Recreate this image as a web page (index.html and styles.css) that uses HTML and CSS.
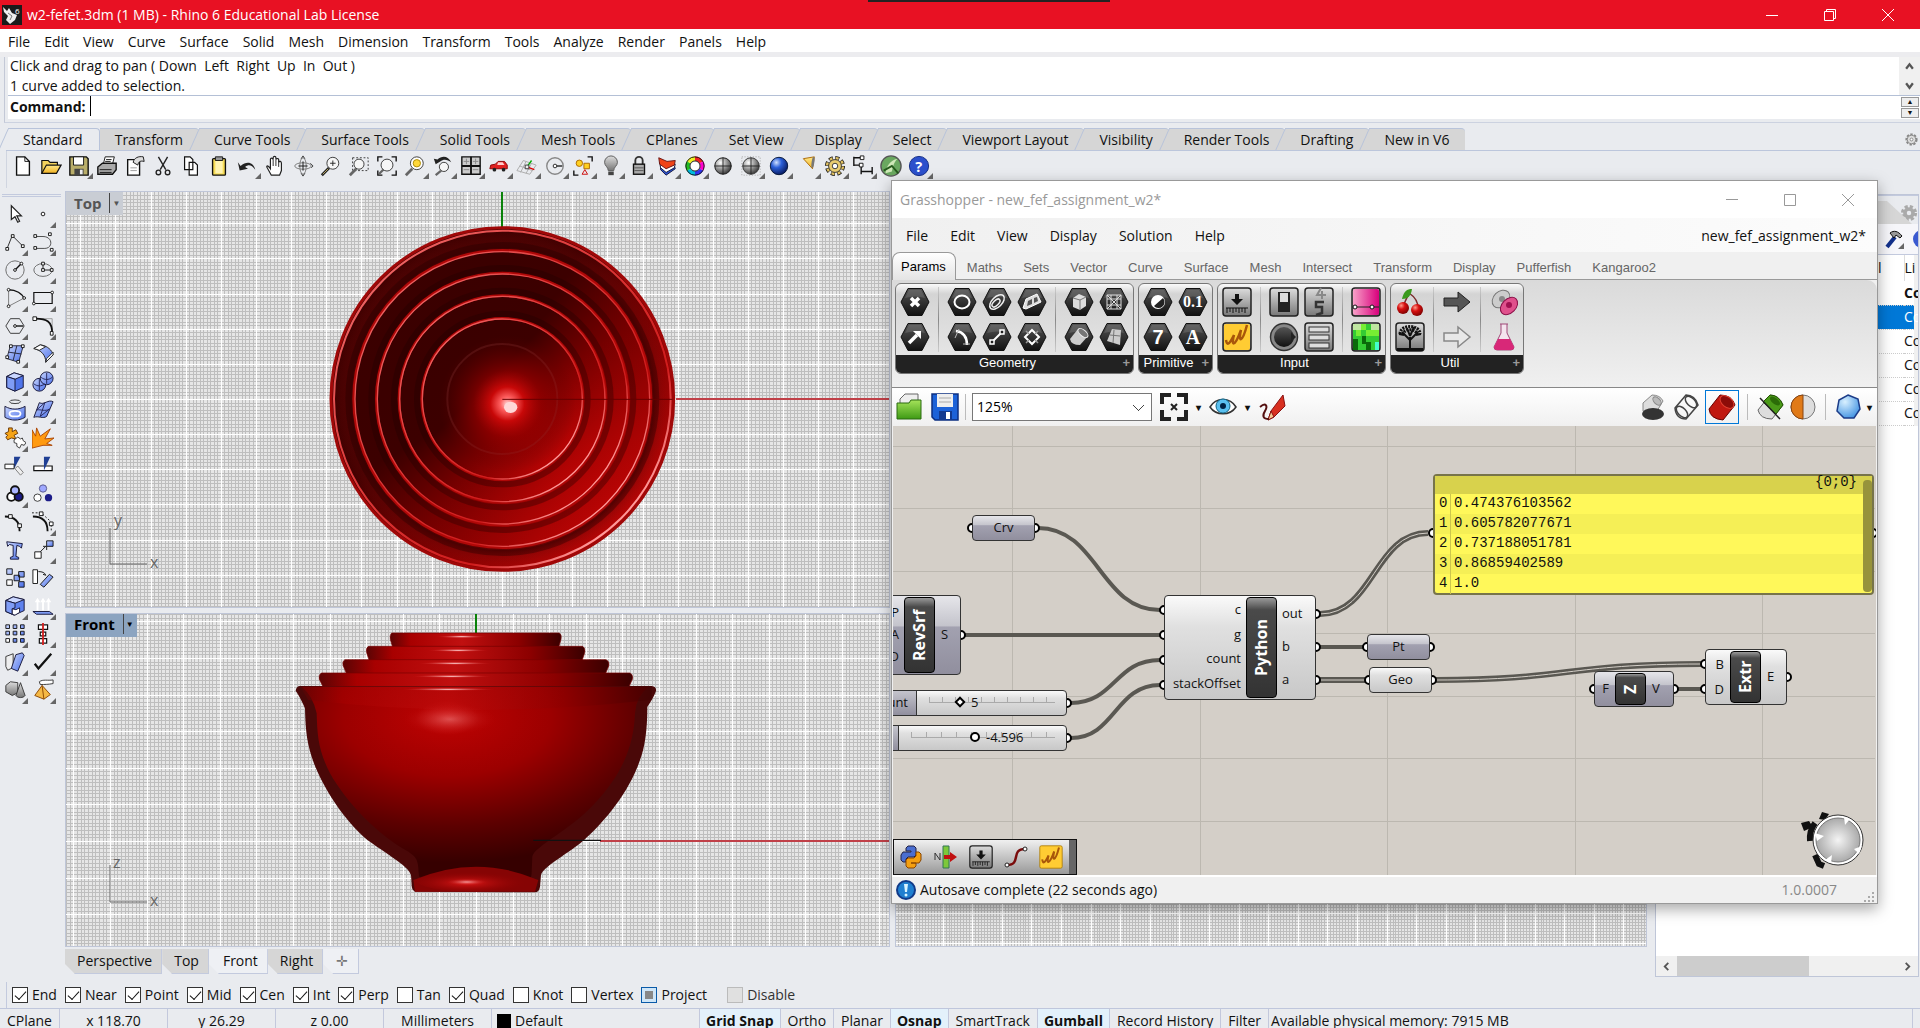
FILE: index.html
```html
<!DOCTYPE html>
<html lang="en">
<head>
  <meta charset="UTF-8" />
  <meta name="viewport" content="width=device-width, initial-scale=1.0"/>
  <title>w2-fefet.3dm (1 MB) - Rhino 6 Educational Lab License</title>
  <link rel="stylesheet" href="styles.css">
</head>
<body>
  <!-- shared gradients and shapes -->
  <svg class="defs" aria-hidden="true">
    <defs>
      <linearGradient id="gBlue" x1="0" y1="0" x2="1" y2="1"><stop offset="0" stop-color="#c9d6ff"/><stop offset="1" stop-color="#4a6fe8"/></linearGradient>
      <linearGradient id="gDark" x1="0" y1="0" x2="0" y2="1"><stop offset="0" stop-color="#555"/><stop offset="1" stop-color="#111"/></linearGradient>
      <linearGradient id="gGray" x1="0" y1="0" x2="0" y2="1"><stop offset="0" stop-color="#ddd"/><stop offset="1" stop-color="#777"/></linearGradient>
      <linearGradient id="gFolder" x1="0" y1="0" x2="0" y2="1"><stop offset="0" stop-color="#ffe98a"/><stop offset="1" stop-color="#f0b020"/></linearGradient>
      <linearGradient id="gGreen" x1="0" y1="0" x2="0" y2="1"><stop offset="0" stop-color="#a5e35a"/><stop offset="1" stop-color="#3e9a14"/></linearGradient>
      <linearGradient id="gPink" x1="0" y1="0" x2="1" y2="0"><stop offset="0" stop-color="#f8a0c8"/><stop offset="1" stop-color="#d8007c"/></linearGradient>
      <radialGradient id="gBall" cx=".35" cy=".3" r=".75"><stop offset="0" stop-color="#fff"/><stop offset=".5" stop-color="#999"/><stop offset="1" stop-color="#333"/></radialGradient>
      <radialGradient id="gBlueBall" cx=".35" cy=".3" r=".75"><stop offset="0" stop-color="#cfe0ff"/><stop offset=".4" stop-color="#2b5fd8"/><stop offset="1" stop-color="#06185c"/></radialGradient>
      <radialGradient id="gRedBall" cx=".35" cy=".3" r=".75"><stop offset="0" stop-color="#ff9a8a"/><stop offset=".4" stop-color="#d81010"/><stop offset="1" stop-color="#7a0000"/></radialGradient>
      <radialGradient id="gSky" cx=".35" cy=".3" r=".8"><stop offset="0" stop-color="#d8f0ff"/><stop offset="1" stop-color="#3a8ee0"/></radialGradient>
      <symbol id="hex" viewBox="0 0 30 30"><path d="M8 1.500h14L29 15l-7 13.500H8L1 15z" fill="url(#gDark)" stroke="#111"/><path d="M9 3h12l4 8Q15 8 5 11z" fill="#888" opacity=".35"/></symbol>
      <symbol id="tile" viewBox="0 0 30 30"><rect x="1" y="1" width="28" height="28" rx="3" fill="url(#gGray)" stroke="#222" stroke-width="1.500"/></symbol>
    </defs>
  </svg>

  <header class="titlebar">
    <svg class="app-icon" viewBox="0 0 20 20"><rect width="20" height="20" fill="#1b1b1b"/><path d="M1 2l4 4 2-3 3 5 5 2-2 5-5 4-4-4 2-4-4-4z" fill="#eee"/><path d="M6 8l4 3-2 4" stroke="#777" fill="none"/><text x="13" y="9" font-size="8" fill="#fff">6</text></svg>
    <h1>w2-fefet.3dm (1 MB) - Rhino 6 Educational Lab License</h1>
    <div class="win-buttons">
      <button aria-label="Minimize"><svg viewBox="0 0 12 12"><path d="M0 6.500h12"/></svg></button>
      <button aria-label="Restore"><svg viewBox="0 0 12 12"><path d="M.5 2.500h9v9h-9zM2.500 2.500v-2h9v9h-2"/></svg></button>
      <button aria-label="Close"><svg viewBox="0 0 12 12"><path d="M0 0l12 12M12 0L0 12"/></svg></button>
    </div>
  </header>

  <nav class="menu">
    <a href="#">File</a><a href="#">Edit</a><a href="#">View</a><a href="#">Curve</a><a href="#">Surface</a><a href="#">Solid</a><a href="#">Mesh</a><a href="#">Dimension</a><a href="#">Transform</a><a href="#">Tools</a><a href="#">Analyze</a><a href="#">Render</a><a href="#">Panels</a><a href="#">Help</a>
  </nav>

  <section class="command">
    <div class="history">
      <div class="history-text"><p>Click and drag to pan ( Down  Left  Right  Up  In  Out )</p><p>1 curve added to selection.</p></div>
      <div class="history-scroll"><button aria-label="Scroll up"><svg viewBox="0 0 8 8"><path d="M1 6l3-4 3 4"/></svg></button><button aria-label="Scroll down"><svg viewBox="0 0 8 8"><path d="M1 2l3 4 3-4"/></svg></button></div>
    </div>
    <div class="prompt">
      <label for="cmd">Command:</label><i class="caret"></i><input id="cmd" type="text">
      <div class="spin"><button aria-label="Previous command">▲</button><button aria-label="Next command">▼</button></div>
    </div>
  </section>

  <nav class="tabs">
    <button class="active">Standard</button><button>Transform</button><button>Curve Tools</button><button>Surface Tools</button><button>Solid Tools</button><button>Mesh Tools</button><button>CPlanes</button><button>Set View</button><button>Display</button><button>Select</button><button>Viewport Layout</button><button>Visibility</button><button>Render Tools</button><button>Drafting</button><button>New in V6</button>
    <svg class="gear" viewBox="0 0 16 16"><circle cx="8" cy="8" r="5.500" fill="#ddd" stroke="#888" stroke-width="2" stroke-dasharray="2.500 1.500"/><circle cx="8" cy="8" r="4.500" fill="#ddd" stroke="#888"/><circle cx="8" cy="8" r="1.500" fill="#fff" stroke="#888"/></svg>
  </nav>

  <div class="toolbar">
    <button aria-label="New"><svg viewBox="0 0 24 24"><path d="M5 2h9l5 5v15H5z" fill="#fff" stroke="#111" stroke-width="1.500"/><path d="M14 2v5h5" fill="none" stroke="#111"/></svg></button>
    <button aria-label="Open"><svg viewBox="0 0 24 24"><path d="M2 20V6h7l2 2h8v3" fill="#f3d25c" stroke="#111" stroke-width="1.300"/><path d="M2 20l5-9h16l-5 9z" fill="url(#gFolder)" stroke="#111" stroke-width="1.300"/></svg></button>
    <button class="fly" aria-label="Save"><svg viewBox="0 0 24 24"><path d="M2 2h18l2 2v18H2z" fill="#b9ae6a" stroke="#111" stroke-width="1.500"/><path d="M6 2h11v9H6z" fill="#fff" stroke="#111"/><path d="M7 15h10v7H7z" fill="#444"/><path d="M13 16h3v5h-3z" fill="#eee"/></svg></button>
    <button aria-label="Print"><svg viewBox="0 0 24 24"><path d="M8 10l2-8h10l-2 8z" fill="#fff" stroke="#111"/><path d="M2 13l5-4h15v7l-4 5H2z" fill="#aaa" stroke="#111" stroke-width="1.500"/><path d="M4 16h13M4 19h13M11 5h6M10 7h6" stroke="#111"/></svg></button>
    <button aria-label="Properties"><svg viewBox="0 0 24 24"><path d="M4 5h13v17H4z" fill="#fff" stroke="#111" stroke-width="1.500"/><path d="M10 8c1-5 6-7 11-6l1 5c-4-1-6 0-7 4z" fill="#ddd" stroke="#111"/><path d="M7 14h7M7 17h7" stroke="#999"/></svg></button>
    <button aria-label="Cut"><svg viewBox="0 0 24 24"><path d="M7 2l8 14M17 2L9 16" stroke="#222" stroke-width="1.500"/><circle cx="7" cy="19" r="2.500" fill="none" stroke="#222" stroke-width="1.500"/><circle cx="17" cy="19" r="2.500" fill="none" stroke="#222" stroke-width="1.500"/></svg></button>
    <button aria-label="Copy"><svg viewBox="0 0 24 24"><path d="M5 2h6l3 3v11H5zM10 8h6l3 3v11h-9z" fill="#fff" stroke="#111" stroke-width="1.300"/></svg></button>
    <button aria-label="Paste"><svg viewBox="0 0 24 24"><rect x="5" y="4" width="14" height="18" rx="1" fill="#f7dc55" stroke="#111" stroke-width="1.500"/><path d="M8 6h8v14H8z" fill="#fff3b0"/><path d="M8 2h8v4H8z" fill="#999" stroke="#111"/></svg></button>
    <button class="fly" aria-label="Undo"><svg viewBox="0 0 24 24"><path d="M2 8l2 9 9-2-3-2c4-3 7-2 11 3-2-8-9-10-16-4z" fill="#222"/></svg></button>
    <button aria-label="Pan"><svg viewBox="0 0 24 24"><path d="M8 22l-5-9c0-2 2-1 4 2V5c0-2 2-2 3 0V3c0-2 3-2 3 0v2c1-2 3-1 3 0v3c1-2 3-1 3 1v8l-2 5z" fill="#fff" stroke="#222" stroke-width="1.300"/><path d="M10 5v7M13 5v7M16 7v6" stroke="#222"/></svg></button>
    <button aria-label="Rotate view"><svg viewBox="0 0 24 24"><ellipse cx="12" cy="12" rx="9" ry="3.500" fill="none" stroke="#777"/><ellipse cx="12" cy="12" rx="3.500" ry="9" fill="none" stroke="#777"/><path d="M12 7v10M7 12h10" stroke="#111"/><path d="M10 4l2-3 2 3M10 20l2 3 2-3M20 9l3 3-2 2" fill="none" stroke="#333"/></svg></button>
    <button aria-label="Zoom"><svg viewBox="0 0 24 24"><path d="M10 14l-8 8" stroke="#222" stroke-width="3"/><path d="M9 15l-6 6" stroke="#c5b26a"/><circle cx="14" cy="9" r="6.500" fill="#f6f6f6" stroke="#333"/><path d="M11 9h6M14 6v6" stroke="#222"/></svg></button>
    <button aria-label="Zoom window"><svg viewBox="0 0 24 24"><path d="M5 3h17v14H5z" fill="none" stroke="#333" stroke-dasharray="2 2"/><path d="M9 15l-7 7" stroke="#666" stroke-width="3"/><circle cx="12" cy="10" r="5.500" fill="#f6f6f6" stroke="#333"/></svg></button>
    <button aria-label="Zoom extents"><svg viewBox="0 0 24 24"><path d="M2 7V2h5M17 2h5v5M22 17v5h-5M7 22H2v-5" fill="none" stroke="#111" stroke-width="1.500"/><path d="M9 15l-6 6" stroke="#666" stroke-width="2.500"/><circle cx="12" cy="11" r="6.500" fill="#f6f6f6" stroke="#333"/></svg></button>
    <button class="fly" aria-label="Zoom selected"><svg viewBox="0 0 24 24"><path d="M9 15l-7 7" stroke="#666" stroke-width="3"/><circle cx="14" cy="9" r="7" fill="#fff" stroke="#333"/><circle cx="14" cy="9" r="4" fill="#ffd83a" stroke="#a80"/></svg></button>
    <button class="fly" aria-label="Undo view"><svg viewBox="0 0 24 24"><path d="M2 4l2 6 5-3c4-3 8-2 12 1-3-7-10-8-15-3z" fill="#222"/><path d="M10 17l-6 5" stroke="#666" stroke-width="2.500"/><circle cx="13" cy="13" r="5" fill="#f6f6f6" stroke="#333"/></svg></button>
    <button class="fly" aria-label="Four viewports"><svg viewBox="0 0 24 24"><path d="M2 2h20v19H2z" fill="#ccc" stroke="#111" stroke-width="1.500"/><path d="M12 2v19M2 12h20" stroke="#111" stroke-width="2"/><path d="M4 7h6M7 4v6M14 7h6M17 4v6M4 16h6M14 16h6" stroke="#888"/></svg></button>
    <button class="fly" aria-label="Named view"><svg viewBox="0 0 24 24"><path d="M2 15l1-4 5-1 3-3h7l3 4v4z" fill="#e02020" stroke="#800"/><path d="M11 8h5l2 3h-8z" fill="#fcc"/><circle cx="7" cy="16" r="2" fill="#222"/><circle cx="17" cy="16" r="2" fill="#222"/></svg></button>
    <button class="fly" aria-label="Set CPlane"><svg viewBox="0 0 24 24"><path d="M1 17L8 6l14 5-7 10zM4 12l14 5M11 7l-6 12M17 9l-6 11" fill="none" stroke="#aaa"/><path d="M12 13l8 3" stroke="#d00" stroke-width="1.500"/><path d="M12 13l5-7" stroke="#0a0" stroke-width="1.500"/><path d="M10 11h4v4h-4z" fill="#eee" stroke="#333"/></svg></button>
    <button class="fly" aria-label="Object snap"><svg viewBox="0 0 24 24"><circle cx="12" cy="12" r="9" fill="none" stroke="#888" stroke-width="1.500"/><path d="M12 12h8" stroke="#222" stroke-width="1.500"/><circle cx="12" cy="12" r="2" fill="#fff" stroke="#222"/></svg></button>
    <button class="fly" aria-label="Select"><svg viewBox="0 0 24 24"><path d="M17 2h5v5M2 17v5h5" fill="none" stroke="#111" stroke-width="1.500"/><circle cx="8" cy="9" r="3.500" fill="#ffd020" stroke="#a60"/><path d="M13 9h6v6h-6z" fill="#ffd020" stroke="#a60"/><path d="M11 21l3-5 3 5z" fill="none" stroke="#c00"/></svg></button>
    <button class="fly" aria-label="Hide"><svg viewBox="0 0 24 24"><path d="M9 17c0-4-4-5-4-9a7 7 0 0 1 14 0c0 4-4 5-4 9z" fill="url(#gGray)" stroke="#555"/><path d="M9 18h6v4H9z" fill="#444"/></svg></button>
    <button class="fly" aria-label="Lock"><svg viewBox="0 0 24 24"><path d="M8 11V6a4 4 0 0 1 8 0v5" fill="none" stroke="#333" stroke-width="2"/><rect x="6" y="10" width="12" height="11" fill="#aaa" stroke="#111" stroke-width="1.500"/><path d="M7 14h10M7 17h10" stroke="#555"/></svg></button>
    <button class="fly" aria-label="Layers"><svg viewBox="0 0 24 24"><path d="M5 9l6 7 9-4 1 3-10 7-6-6z" fill="#2b55d8" stroke="#113"/><path d="M4 8l7 6 10-4-1 4-9 5-6-5z" fill="#fff" stroke="#113"/><path d="M3 3l9 4 9-1-1 5-9 4-7-5z" fill="#f04418" stroke="#611"/></svg></button>
    <button class="fly" aria-label="Color wheel"><svg viewBox="0 0 24 24"><g fill="none" stroke-width="4.500"><path d="M12 4a8 8 0 0 1 7 4" stroke="#e22"/><path d="M19 8a8 8 0 0 1 0 8" stroke="#f0c"/><path d="M19 16a8 8 0 0 1-7 4" stroke="#33e"/><path d="M12 20a8 8 0 0 1-7-4" stroke="#0bd"/><path d="M5 16a8 8 0 0 1 0-8" stroke="#2b2"/><path d="M5 8a8 8 0 0 1 7-4" stroke="#ee2"/></g><circle cx="12" cy="12" r="10" fill="none" stroke="#111"/><circle cx="12" cy="12" r="5.500" fill="#fff" stroke="#111"/></svg></button>
    <button aria-label="Shade"><svg viewBox="0 0 24 24"><circle cx="12" cy="12" r="9" fill="url(#gBall)" stroke="#111"/><path d="M12 3v18M3 12h18" stroke="#222"/></svg></button>
    <button class="fly" aria-label="Ghosted"><svg viewBox="0 0 24 24"><path d="M2 2h20v20H2z" fill="none" stroke="#999" stroke-dasharray="1 2"/><circle cx="12" cy="12" r="9" fill="url(#gBall)" stroke="#333"/><path d="M12 3v18M3 12h18" stroke="#222"/></svg></button>
    <button class="fly" aria-label="Render"><svg viewBox="0 0 24 24"><circle cx="12" cy="12" r="9.500" fill="url(#gBlueBall)" stroke="#013"/></svg></button>
    <button class="fly" aria-label="Spotlight"><svg viewBox="0 0 24 24"><path d="M8 4l12-2-2 13z" fill="url(#gFolder)" stroke="#a60"/><ellipse cx="18.500" cy="8" rx="1.500" ry="6" fill="#777" transform="rotate(8 18 8)"/></svg></button>
    <button class="fly" aria-label="Options"><svg viewBox="0 0 24 24"><circle cx="12" cy="12" r="8.500" fill="none" stroke="#222" stroke-width="5" stroke-dasharray="4.200 2.480"/><circle cx="12" cy="12" r="8.500" fill="none" stroke="#e0c060" stroke-width="3" stroke-dasharray="3 3.680" stroke-dashoffset="-.6"/><circle cx="12" cy="12" r="7" fill="#e8cc70" stroke="#333"/><circle cx="12" cy="12" r="3" fill="#fff" stroke="#333"/></svg></button>
    <button class="fly" aria-label="Dimension"><svg viewBox="0 0 24 24"><path d="M2 2v10M2 3h9M2 11h7M10 13v8M22 13v8M10 18h12" fill="none" stroke="#111" stroke-width="1.500"/><path d="M9 1h4v4H9zM8 9h4v4H8z" fill="#fff" stroke="#111"/></svg></button>
    <button aria-label="Grasshopper"><svg viewBox="0 0 24 24"><circle cx="12" cy="12" r="11" fill="#6aa860" stroke="#555" stroke-width="1.500"/><path d="M6 20c1-8 5-14 13-16-4 4-5 9-6 14" fill="#cfe8b8"/><path d="M4 17l9-5 7 8" fill="none" stroke="#245a1c" stroke-width="2"/></svg></button>
    <button class="fly" aria-label="Help"><svg viewBox="0 0 24 24"><circle cx="12" cy="12" r="10.500" fill="#2c50cc" stroke="#0d2680"/><text x="8" y="18" font-size="16" font-weight="700" fill="#fff">?</text></svg></button>
  </div>

  <main class="workspace">
    <aside class="palette">
      <button aria-label="Select"><svg viewBox="0 0 24 24"><path d="M8 3v15l4-3 3 6 2-1-3-6h5z" fill="#fff" stroke="#222" stroke-width="1.300"/></svg></button>
      <button class="fly" aria-label="Point"><svg viewBox="0 0 24 24"><circle cx="12" cy="12" r="2" fill="#fff" stroke="#111"/></svg></button>
      <button class="fly" aria-label="Polyline"><svg viewBox="0 0 24 24"><path d="M3 20L9 5l12 12" fill="none" stroke="#222"/><path d="M2 18h3v3H2zM8 4h3v3H8zM19 15h3v3h-3z" fill="#fff" stroke="#111"/></svg></button>
      <button class="fly" aria-label="Curve"><svg viewBox="0 0 24 24"><path d="M4 6h8c11 0 11 13 2 13H4" fill="none" stroke="#444"/><path d="M2 4h3v3H2zM18 2h3v3h-3zM2 17h3v3H2zM20 19h3v3h-3z" fill="#fff" stroke="#111"/></svg></button>
      <button class="fly" aria-label="Circle"><svg viewBox="0 0 24 24"><circle cx="12" cy="12" r="10" fill="none" stroke="#666"/><path d="M12 12l7-7" stroke="#111" stroke-width="1.500"/><circle cx="12" cy="12" r="1.500" fill="#fff" stroke="#111"/><circle cx="19" cy="5" r="1.500" fill="#fff" stroke="#111"/></svg></button>
      <button class="fly" aria-label="Ellipse"><svg viewBox="0 0 24 24"><ellipse cx="12" cy="12" rx="10" ry="7" fill="none" stroke="#666"/><path d="M12 5v7h10" fill="none" stroke="#111"/><path d="M10.500 3.500h3v3h-3zM10.500 10.500h3v3h-3zM20 10.500h3v3h-3z" fill="#fff" stroke="#111"/></svg></button>
      <button class="fly" aria-label="Arc"><svg viewBox="0 0 24 24"><path d="M5 3c8 0 15 4 17 10" fill="none" stroke="#111" stroke-width="1.500"/><path d="M5 3v18l17-9" fill="none" stroke="#777"/><circle cx="5" cy="3" r="1.500" fill="#fff" stroke="#111"/><circle cx="5" cy="21" r="1.500" fill="#fff" stroke="#111"/><circle cx="22" cy="12" r="1.500" fill="#fff" stroke="#111"/></svg></button>
      <button class="fly" aria-label="Rectangle"><svg viewBox="0 0 24 24"><path d="M2 6h20v12H2z" fill="none" stroke="#111" stroke-width="1.300"/><circle cx="22" cy="6" r="1.500" fill="#fff" stroke="#111"/><circle cx="2" cy="18" r="1.500" fill="#fff" stroke="#111"/></svg></button>
      <button class="fly" aria-label="Polygon"><svg viewBox="0 0 24 24"><path d="M7 4h10l5 8-5 8H7l-5-8z" fill="none" stroke="#333"/><path d="M12 12h9" stroke="#111" stroke-width="1.500"/><circle cx="12" cy="12" r="1.500" fill="#fff" stroke="#111"/></svg></button>
      <button class="fly" aria-label="Fillet"><svg viewBox="0 0 24 24"><path d="M4 4h18v17" fill="none" stroke="#999"/><path d="M4 4c12 0 18 3 18 16" fill="none" stroke="#111" stroke-width="2"/><path d="M1 2h4v4H1zM20 18h3v4h-3z" fill="#fff" stroke="#111"/></svg></button>
      <button class="fly" aria-label="Surface from points"><svg viewBox="0 0 24 24"><path d="M7 3h14l-5 18-13-4z" fill="url(#gBlue)" stroke="#223"/><path d="M14 3l-4 16M5 10l14 2" stroke="#223"/><path d="M6 2h3v3H6zM19 2h3v3h-3zM2 14h3v3H2zM14 19h3v3h-3z" fill="#fff" stroke="#111"/></svg></button>
      <button class="fly" aria-label="Sweep"><svg viewBox="0 0 24 24"><path d="M2 6l7-4c8 1 13 6 14 11l-8 8c0-8-5-13-13-15z" fill="url(#gBlue)" stroke="#222"/><path d="M2 6l7-4 6 2-7 4zM15 21l8-8v-3l-7 7z" fill="#fff" stroke="#222"/></svg></button>
      <button class="fly" aria-label="Box"><svg viewBox="0 0 24 24"><path d="M3 6l8-4 10 3v13l-9 4-9-4z" fill="#4f74ea" stroke="#113"/><path d="M3 6l9 3 9-4-10-3z" fill="#c9d6ff" stroke="#113"/><path d="M3 6l9 3v13l-9-4z" fill="#7f9cf5" stroke="#113"/></svg></button>
      <button class="fly" aria-label="Boolean union"><svg viewBox="0 0 24 24"><circle cx="8" cy="15" r="7" fill="url(#gBlue)" stroke="#113"/><circle cx="16" cy="8" r="7" fill="url(#gBlue)" stroke="#113"/><path d="M2 14c4 3 8 3 12 0M10 7c4 3 8 3 12 0M8 8v13M16 2v12" fill="none" stroke="#225"/></svg></button>
      <button class="fly" aria-label="Project curve"><svg viewBox="0 0 24 24"><ellipse cx="12" cy="3" rx="6" ry="2" fill="none" stroke="#333"/><path d="M1 8c7 4 15 4 22 0v12c-7 4-15 4-22 0z" fill="url(#gBlue)" stroke="#113"/><ellipse cx="12" cy="16" rx="6" ry="3" fill="none" stroke="#fff" stroke-width="2"/></svg></button>
      <button class="fly" aria-label="Mesh"><svg viewBox="0 0 24 24"><path d="M8 4c5 3 10-4 15-1l-7 16c-4 3-9-1-14 1z" fill="url(#gBlue)" stroke="#113"/><path d="M5 12c5-1 9 2 14-1M14 4L9 19M5 12l9-8M9 19l10-8" fill="none" stroke="#225"/></svg></button>
      <button class="fly" aria-label="Join"><svg viewBox="0 0 24 24"><path d="M1 7l4-2V1h4v4l4-2 2 4-4 2 2 4-5-1-4 2-2-3 2-2z" fill="#f5a418" stroke="#630"/><path d="M11 14l4-3 3 2 2-1 1 3 3 2-2 3-3-1-2 4-3-2v-3l-3-1z" fill="#fff" stroke="#333"/></svg></button>
      <button aria-label="Explode"><svg viewBox="0 0 24 24"><path d="M0 3l4 7 1-9 4 9L20 2l-6 11 10-1-8 6 6 2-10 0-12 3z" fill="#ff9a10" stroke="#a40"/></svg></button>
      <button aria-label="Trim"><svg viewBox="0 0 24 24"><path d="M11 2h7l-7 13z" fill="#1f3f94"/><path d="M1 10h10v5H1z" fill="#fff" stroke="#111"/><path d="M12 15l3-3 6 7-3 3z" fill="#eee" stroke="#777"/></svg></button>
      <button aria-label="Split"><svg viewBox="0 0 24 24"><path d="M2 12h20v5H2z" fill="#fff" stroke="#111" stroke-width="1.300"/><path d="M13 2h7l-7 15z" fill="#1f3f94"/></svg></button>
      <button class="fly" aria-label="Group"><svg viewBox="0 0 24 24"><g stroke="#111" stroke-width="2"><circle cx="8" cy="15" r="4.500" fill="#fff"/><circle cx="16" cy="15" r="4.500" fill="#1c1c88"/><circle cx="12" cy="8" r="4.500" fill="#a9b4ff"/></g></svg></button>
      <button aria-label="Ungroup"><svg viewBox="0 0 24 24"><circle cx="12" cy="6" r="4" fill="#9fa8ff" stroke="#558"/><circle cx="6" cy="16" r="4" fill="#fff" stroke="#333"/><circle cx="18" cy="16" r="4" fill="#1c1c88"/></svg></button>
      <button aria-label="Edit points"><svg viewBox="0 0 24 24"><path d="M1 6c10 0 16 5 16 16" fill="none" stroke="#111" stroke-width="2"/><path d="M5 4h4v4H5zM15 14h4v4h-4z" fill="#fff" stroke="#111"/></svg></button>
      <button class="fly" aria-label="Control points"><svg viewBox="0 0 24 24"><path d="M1 6c10 0 16 5 16 16" fill="none" stroke="#111" stroke-width="2"/><path d="M0 2h10l11 10v10" fill="none" stroke="#111" stroke-dasharray="2 2"/><path d="M8 1h4v4H8zM19 12h4v4h-4z" fill="#fff" stroke="#111"/></svg></button>
      <button aria-label="Text"><svg viewBox="0 0 24 24"><path d="M3 3l17 2-1 5-2-2-3-1-1 12 3 1v2H7v-2l3-1V7L6 6 4 8z" fill="url(#gBlue)" stroke="#113"/></svg></button>
      <button class="fly" aria-label="Move"><svg viewBox="0 0 24 24"><path d="M9 14l6-6M12 8h4v4" fill="none" stroke="#111"/><path d="M3 14h7v7H3z" fill="#fff" stroke="#111"/><path d="M16 2h7v6h-7z" fill="url(#gBlue)" stroke="#111"/></svg></button>
      <button aria-label="Copy objects"><svg viewBox="0 0 24 24"><g fill="url(#gBlue)" stroke="#111"><path d="M3 2h6v6H3zM16 5h6v6h-6zM11 9h6v6h-6zM16 16h6v6h-6z"/><path d="M3 14h6v6H3z" fill="#fff"/></g></svg></button>
      <button aria-label="Rotate"><svg viewBox="0 0 24 24"><path d="M1 3h5v15H1z" fill="#fff" stroke="#111"/><path d="M7 5c4 0 7 1 8 4l-3-1" fill="none" stroke="#111"/><path d="M9 19L19 8l4 3-10 11z" fill="url(#gBlue)" stroke="#111"/></svg></button>
      <button class="fly" aria-label="Scale"><svg viewBox="0 0 24 24"><path d="M2 6l8-4 12 3v12l-11 5-9-4z" fill="#5f82ee" stroke="#113"/><path d="M2 6l10 3 10-4-12-3z" fill="#c9d6ff" stroke="#113"/><path d="M2 6l10 3v5l-3 1v6l-7-3z" fill="#7f9cf5" stroke="#113"/><path d="M9 15l4 1 4-2v5l-5 3-3-1z" fill="#fff" stroke="#113"/></svg></button>
      <button class="fly" aria-label="Extrude"><svg viewBox="0 0 24 24"><path d="M1 18h18l4 3H5z" fill="#7f9cf5" stroke="#113"/><path d="M6 17V6M12 17V6M18 17V6" stroke="#fff" stroke-width="2"/><path d="M3 8l3-5 3 5zM9 8l3-5 3 5zM15 8l3-5 3 5z" fill="#fff"/></svg></button>
      <button class="fly" aria-label="Array"><svg viewBox="0 0 24 24"><g fill="url(#gBlue)" stroke="#111"><path d="M2 2h4v4H2zM10 2h4v4h-4zM18 2h4v4h-4zM2 9h4v4H2zM10 9h4v4h-4zM18 9h4v4h-4zM10 17h4v4h-4zM18 17h4v4h-4z"/><path d="M2 17h4v4H2z" fill="#fff"/></g></svg></button>
      <button class="fly" aria-label="Align"><svg viewBox="0 0 24 24"><path d="M7 2h10v5H7zM9 10h6v4H9zM8 17h8v5H8z" fill="#fff" stroke="#111" stroke-width="1.300"/><path d="M12 0v24" stroke="#d42020" stroke-width="2"/></svg></button>
      <button class="fly" aria-label="Cage edit"><svg viewBox="0 0 24 24"><path d="M2 6l8-3v15l-6 3-2-4z" fill="#eee" stroke="#333"/><path d="M13 4l7-2 2 3-7 17-7-3z" fill="url(#gBlue)" stroke="#113"/></svg></button>
      <button class="fly" aria-label="Check"><svg viewBox="0 0 24 24"><path d="M3 14l4 5L21 3" fill="none" stroke="#111" stroke-width="2.500"/></svg></button>
      <button class="fly" aria-label="Solids"><svg viewBox="0 0 24 24"><path d="M2 7l5-4 8 1v11l-6 3-7-4z" fill="url(#gGray)" stroke="#333"/><path d="M18 4l5 14c-2 3-8 3-10 0z" fill="url(#gGray)" stroke="#333"/></svg></button>
      <button class="fly" aria-label="Pyramid"><svg viewBox="0 0 24 24"><path d="M8 3c4-3 9-1 15-2v4c-6 1-9 1-14 1z" fill="#fff" stroke="#333"/><path d="M11 7l9 10-7 5-10-4z" fill="#f5b844" stroke="#840"/><path d="M11 7l2 15" stroke="#840"/></svg></button>
    </aside>

    <section class="stage">
      <div class="viewports">
        <div class="viewport">
          <svg class="scene" data-x="436" data-y="207" data-step="35.14">
            <defs>
              <linearGradient id="lit" x1=".1" y1=".1" x2=".85" y2=".85"><stop offset="0" stop-color="#3a0000"/><stop offset=".4" stop-color="#3c0000"/><stop offset=".65" stop-color="#740000"/><stop offset="1" stop-color="#b80404"/></linearGradient>
              <linearGradient id="shine" x1="0" y1="0" x2="1" y2="1"><stop offset=".1" stop-color="#f06868"/><stop offset=".35" stop-color="#e04040"/><stop offset=".7" stop-color="#d01c1c"/><stop offset=".85" stop-color="#ff9a9a"/><stop offset="1" stop-color="#d02020"/></linearGradient>
              <radialGradient id="rim" cx=".5" cy=".5" r=".5"><stop offset=".86" stop-color="#300" stop-opacity=".9"/><stop offset=".93" stop-color="#700808" stop-opacity=".3"/><stop offset="1" stop-color="#900c0c" stop-opacity="0"/></radialGradient>
              <radialGradient id="glow"><stop offset="0" stop-color="#ffd8d8"/><stop offset=".1" stop-color="#ff6060"/><stop offset=".25" stop-color="#c80808"/><stop offset=".5" stop-color="#980000" stop-opacity=".6"/><stop offset="1" stop-color="#600000" stop-opacity="0"/></radialGradient>
            </defs>
            <path class="axis-y" d="M436 0v40"/><path class="axis-x" d="M610 207h2000"/>
            <g transform="translate(234 8) scale(.33333)">
              <circle cx="607" cy="597" r="514" fill="url(#lit)" stroke="#a00808" stroke-width="9"/>
              <circle cx="607" cy="597" r="510" fill="url(#rim)"/>
              <circle cx="607" cy="597" r="505" fill="none" stroke="url(#shine)" stroke-width="6"/>
              <g fill="url(#lit)" stroke="#b00808" stroke-width="8"><circle cx="607" cy="597" r="446"/><circle cx="607" cy="597" r="378"/><circle cx="607" cy="597" r="310"/><circle cx="607" cy="597" r="242"/></g>
              <g fill="none" stroke="#200000" stroke-opacity=".35" stroke-width="18"><circle cx="607" cy="597" r="462"/><circle cx="607" cy="597" r="393"/><circle cx="607" cy="597" r="325"/><circle cx="607" cy="597" r="256"/></g>
              <g fill="none" stroke="url(#shine)" stroke-width="4"><circle cx="607" cy="597" r="442"/><circle cx="607" cy="597" r="375"/><circle cx="607" cy="597" r="308"/><circle cx="607" cy="597" r="240"/></g>
              <circle cx="607" cy="597" r="165" fill="none" stroke="#944" stroke-opacity=".25" stroke-width="6"/>
              <circle cx="622" cy="612" r="205" fill="url(#glow)"/>
              <ellipse cx="632" cy="622" rx="20" ry="17" fill="#ffd8d8"/>
              <path d="M607 598h510" stroke="#600" stroke-width="3"/>
            </g>
            <path class="gnomon" d="M44 336v36h37"/><text x="48" y="334">y</text><text x="84" y="376">x</text>
          </svg>
          <button class="vp-label">Top<span>▼</span></button>
        </div>
        <div class="viewport"><svg class="scene" data-x="420" data-y="207" data-step="29.6"></svg></div>
        <div class="viewport">
          <svg class="scene" data-x="410" data-y="227" data-step="36.6">
            <defs>
              <radialGradient id="body" cx=".42" cy=".16" r=".75"><stop offset="0" stop-color="#d01818"/><stop offset=".12" stop-color="#b40202"/><stop offset=".4" stop-color="#9c0000"/><stop offset=".75" stop-color="#5c0000"/><stop offset="1" stop-color="#360000"/></radialGradient>
              <linearGradient id="lip" x1="0" x2="1"><stop offset="0" stop-color="#5a0404"/><stop offset=".12" stop-color="#a80000"/><stop offset=".42" stop-color="#c01010"/><stop offset=".75" stop-color="#8c0000"/><stop offset="1" stop-color="#3a0000"/></linearGradient>
              <radialGradient id="spec"><stop offset="0" stop-color="#ffd0d0"/><stop offset="1" stop-color="#d01010" stop-opacity="0"/></radialGradient>
              <radialGradient id="foot" cx=".42" cy=".6" r=".5"><stop offset="0" stop-color="#e01818"/><stop offset="1" stop-color="#8c0000" stop-opacity="0"/></radialGradient>
            </defs>
            <path class="axis-y" d="M410 0v22"/><path class="axis-x" d="M534 227h2000"/>
            <g transform="translate(214 -24) scale(.33333)">
              <g fill="url(#lip)" stroke="#700" stroke-width="2">
                <path d="M335 129H838Q846 134 843 148L836 172H338L331 148Q329 134 335 129z"/>
                <path d="M265 169H908Q917 174 914 188L906 212H268L260 188Q257 174 265 169z"/>
                <path d="M195 209H978Q989 214 986 228L976 252H200L190 228Q186 214 195 209z"/>
                <path d="M124 249H1050Q1060 254 1057 268L1046 292H130L118 268Q115 254 124 249z"/>
              </g>
              <path d="M47 302Q49 288 60 288H1115Q1130 290 1128 303Q1120 325 1102 350C1102 420 1095 470 1080 510C1050 600 980 690 910 752C850 800 790 830 783 855L780 890Q778 906 765 907L405 905Q395 900 395 885L393 855C385 830 340 805 262 750C190 690 120 580 95 500C78 450 76 400 75 355Q60 320 47 302z" fill="#4a0808"/>
              <path d="M66 291H1105Q1068 320 1065 370C1062 450 1040 540 940 645C870 720 762 770 757 800L755 850Q755 870 740 870L430 868Q416 866 416 850C415 810 410 800 380 782C300 740 200 640 150 550C115 480 112 440 110 370Q100 320 66 291z" fill="url(#body)"/>
              <path d="M60 289H1115v40Q590 390 85 330z" fill="url(#lip)" opacity=".5"/>
              <path d="M400 870Q590 790 775 870L765 905H405z" fill="#860404"/>
              <ellipse cx="590" cy="872" rx="180" ry="34" fill="url(#foot)"/>
              <ellipse cx="510" cy="388" rx="140" ry="46" fill="url(#spec)" opacity=".3"/>
              <ellipse cx="560" cy="876" rx="60" ry="10" fill="url(#spec)" opacity=".7"/>
              <g fill="url(#spec)"><ellipse cx="545" cy="140" rx="75" ry="5"/><ellipse cx="535" cy="181" rx="90" ry="5"/><ellipse cx="525" cy="220" rx="110" ry="5"/><ellipse cx="515" cy="259" rx="120" ry="5"/><ellipse cx="505" cy="298" rx="140" ry="5"/></g>
              <path d="M760 751h203" stroke="#111" stroke-width="4"/>
            </g>
            <path class="gnomon" d="M44 251v37h37"/><text x="47" y="254">z</text><text x="84" y="292">x</text>
          </svg>
          <button class="vp-label current">Front<span>▼</span></button>
        </div>
        <div class="viewport"><svg class="scene" data-x="17" data-y="299" data-step="29.6"></svg></div>
      </div>
      <nav class="view-tabs">
        <button>Perspective</button><button>Top</button><button class="active">Front</button><button>Right</button><button class="add" aria-label="New viewport">✛</button>
      </nav>
    </section>

    <aside class="layers">
      <div class="layers-tab"><i></i><svg viewBox="0 0 20 20"><circle cx="10" cy="10" r="7" fill="none" stroke="#aaa" stroke-width="4" stroke-dasharray="3.300 2.200"/><circle cx="10" cy="10" r="4.500" fill="none" stroke="#aaa" stroke-width="4"/></svg></div>
      <div class="layers-tools">
        <button class="fly" aria-label="Layer tools"><svg viewBox="0 0 20 20"><path d="M3 18l8-10" stroke="#12308a" stroke-width="4"/><path d="M6 4c4-3 8-2 12 3l-2 2-4-3-2 3z" fill="#999" stroke="#111"/></svg></button>
        <button aria-label="Help"><svg viewBox="0 0 20 20"><circle cx="10" cy="10" r="9" fill="#3a5ad0"/></svg></button>
      </div>
      <table>
        <thead><tr><th>l</th><th>Li</th></tr></thead>
        <tbody>
          <tr class="bold"><td></td><td>Co</td></tr>
          <tr class="selected"><td></td><td>Co</td></tr>
          <tr><td></td><td>Co</td></tr>
          <tr><td></td><td>Co</td></tr>
          <tr><td></td><td>Co</td></tr>
          <tr><td></td><td>Co</td></tr>
        </tbody>
      </table>
      <div class="hscroll"><button aria-label="Scroll left"><svg viewBox="0 0 8 10"><path d="M6 1L2 5l4 4"/></svg></button><div class="track"><i></i></div><button aria-label="Scroll right"><svg viewBox="0 0 8 10"><path d="M2 1l4 4-4 4"/></svg></button></div>
    </aside>
  </main>

  <form class="osnap">
    <label><input type="checkbox" checked>End</label>
    <label><input type="checkbox" checked>Near</label>
    <label><input type="checkbox" checked>Point</label>
    <label><input type="checkbox" checked>Mid</label>
    <label><input type="checkbox" checked>Cen</label>
    <label><input type="checkbox" checked>Int</label>
    <label><input type="checkbox" checked>Perp</label>
    <label><input type="checkbox">Tan</label>
    <label><input type="checkbox" checked>Quad</label>
    <label><input type="checkbox">Knot</label>
    <label><input type="checkbox">Vertex</label>
    <label><input type="checkbox" class="mixed">Project</label>
    <label class="last"><input type="checkbox" disabled>Disable</label>
  </form>

  <footer class="status">
    <button class="w-s">CPlane</button><span class="w-m">x 118.70</span><span class="w-m">y 26.29</span><span class="w-m">z 0.00</span><span class="w-m">Millimeters</span>
    <button class="layer"><i></i>Default</button>
    <button class="on">Grid Snap</button><button>Ortho</button><button>Planar</button><button class="on">Osnap</button><button>SmartTrack</button><button class="on">Gumball</button><button>Record History</button><button>Filter</button>
    <span class="memory">Available physical memory: 7915 MB</span>
  </footer>

  <section class="gh">
    <header class="gh-title">
      <h2>Grasshopper - new_fef_assignment_w2*</h2>
      <div class="win-buttons">
        <button aria-label="Minimize"><svg viewBox="0 0 12 12"><path d="M0 5.500h12"/></svg></button>
        <button aria-label="Maximize"><svg viewBox="0 0 12 12"><path d="M.5.5h11v11H.5z"/></svg></button>
        <button aria-label="Close"><svg viewBox="0 0 12 12"><path d="M0 0l12 12M12 0L0 12"/></svg></button>
      </div>
    </header>
    <nav class="gh-menu">
      <a href="#">File</a><a href="#">Edit</a><a href="#">View</a><a href="#">Display</a><a href="#">Solution</a><a href="#">Help</a>
      <span>new_fef_assignment_w2*</span>
    </nav>
    <nav class="gh-tabs">
      <button class="active">Params</button><button>Maths</button><button>Sets</button><button>Vector</button><button>Curve</button><button>Surface</button><button>Mesh</button><button>Intersect</button><button>Transform</button><button>Display</button><button>Pufferfish</button><button>Kangaroo2</button>
    </nav>

    <div class="ribbon">
      <div class="group">
        <div class="blocks">
          <div class="block">
            <svg viewBox="0 0 30 30"><use href="#hex"/><path d="M11 11l8 8M19 11l-8 8" stroke="#fff" stroke-width="3.500"/></svg>
            <svg viewBox="0 0 30 30"><use href="#hex"/><path d="M9 21l8-8" stroke="#fff" stroke-width="3.500"/><path d="M13 9h8v8z" fill="#fff"/></svg>
          </div>
          <div class="block">
            <svg viewBox="0 0 30 30"><use href="#hex"/><ellipse cx="15" cy="15" rx="7.500" ry="6.500" fill="none" stroke="#fff" stroke-width="2"/></svg>
            <svg viewBox="0 0 30 30"><use href="#hex"/><path d="M9 9c7 1 11 6 11 14" fill="none" stroke="#fff" stroke-width="2.500"/><path d="M8 16l4-9M16 22h7" stroke="#bbb"/></svg>
            <svg viewBox="0 0 30 30"><use href="#hex"/><g fill="none" stroke="#eee" stroke-width="1.500"><ellipse cx="15" cy="15" rx="9" ry="5" transform="rotate(-45 15 15)"/><ellipse cx="14" cy="16" rx="5" ry="2.500" transform="rotate(-45 14 16)"/></g></svg>
            <svg viewBox="0 0 30 30"><use href="#hex"/><path d="M10 20L20 10" stroke="#fff" stroke-width="2"/><path d="M8 18h4v4H8zM18 8h4v4h-4z" fill="#222" stroke="#fff" stroke-width="1.500"/></svg>
            <svg viewBox="0 0 30 30"><use href="#hex"/><path d="M9 12l11-5 4 8-15 7-3-1z" fill="#ddd" stroke="#fff"/><path d="M11 14l4-2v5l-5 2zM17 11l3-1 1 4-4 2z" fill="#555"/></svg>
            <svg viewBox="0 0 30 30"><use href="#hex"/><path d="M15 8l7 7-7 7-7-7z" fill="none" stroke="#fff" stroke-width="2"/><path d="M9 9l3 3M21 9l-3 3M9 21l3-3M21 21l-3-3" stroke="#999" stroke-width="1.500"/></svg>
          </div>
          <div class="block">
            <svg viewBox="0 0 30 30"><use href="#hex"/><path d="M9 11l6-4 7 3v9l-6 4-7-3z" fill="#ddd"/><path d="M9 11l7 2v10M16 13l6-3" fill="none" stroke="#777"/></svg>
            <svg viewBox="0 0 30 30"><use href="#hex"/><path d="M6 17L14 7q8 0 10 7l-8 9q-9 0-10-6z" fill="#ccc"/><ellipse cx="19" cy="11" rx="3" ry="6" transform="rotate(-50 19 11)" fill="#777" stroke="#eee"/></svg>
            <svg viewBox="0 0 30 30"><use href="#hex"/><path d="M8 8h14v14H8zM12 8v14M18 8v14M8 12h14M8 18h14M8 8l14 14M22 8L8 22" fill="none" stroke="#ddd"/></svg>
            <svg viewBox="0 0 30 30"><use href="#hex"/><path d="M13 7l9 1-1 15-13-4z" fill="#ccc"/><path d="M15 8l-1 13M11 13l10 1" stroke="#777"/></svg>
          </div>
        </div>
        <h3>Geometry</h3>
      </div>
      <div class="group">
        <div class="blocks">
          <div class="block">
            <svg viewBox="0 0 30 30"><use href="#hex"/><circle cx="15" cy="15" r="7" fill="#fff"/><path d="M20 11a6 6 0 0 1-9 8z" fill="#222"/></svg>
            <svg viewBox="0 0 30 30"><use href="#hex"/><text class="glyph sans" x="15" y="22">7</text></svg>
            <svg viewBox="0 0 30 30"><use href="#hex"/><text class="glyph small" x="15" y="20">0.1</text></svg>
            <svg viewBox="0 0 30 30"><use href="#hex"/><text class="glyph" x="15" y="22">A</text></svg>
          </div>
        </div>
        <h3>Primitive</h3>
      </div>
      <div class="group">
        <div class="blocks">
          <div class="block">
            <svg viewBox="0 0 30 30"><use href="#tile"/><path d="M13 7h4v5h4l-6 6-6-6h4z" fill="#111"/><path d="M4 21h22M5 21v5M8 21v4M11 21v5M14 21v4M17 21v5M20 21v4M23 21v5" stroke="#111"/></svg>
            <svg viewBox="0 0 30 30"><use href="#tile"/><rect x="2" y="2" width="26" height="26" rx="2" fill="#fc3"/><path d="M4 18c1 6 3 5 8-5-3 10 0 14 7-5-3 12 1 14 6-5" fill="none" stroke="#a8560a" stroke-width="2.500"/></svg>
          </div>
          <div class="block">
            <svg viewBox="0 0 30 30"><use href="#tile"/><rect x="9" y="5" width="12" height="20" fill="#222"/><rect x="11" y="6" width="8" height="9" fill="#ddd"/></svg>
            <svg viewBox="0 0 30 30"><circle cx="15" cy="15" r="13.500" fill="#888" stroke="#333" stroke-width="1.500"/><circle cx="15" cy="15" r="10" fill="url(#gDark)"/><path d="M22 10l5 5-5 5z" fill="#222"/></svg>
            <svg viewBox="0 0 30 30"><use href="#tile"/><path d="M17 1l-4 7h9M18 4v8" fill="none" stroke="#888" stroke-width="2"/><path d="M20 15h-8v5h6v6l-6 2" fill="none" stroke="#333" stroke-width="2.500"/></svg>
            <svg viewBox="0 0 30 30"><use href="#tile"/><g fill="#ddd" stroke="#333"><rect x="5" y="5" width="20" height="5"/><rect x="5" y="13" width="20" height="5"/><rect x="5" y="21" width="20" height="5"/></g></svg>
          </div>
          <div class="block">
            <svg viewBox="0 0 30 30"><use href="#tile"/><rect x="2" y="2" width="26" height="26" rx="2" fill="url(#gPink)"/><path d="M2 20h26" stroke="#222"/><circle cx="4" cy="20" r="2" fill="#fff" stroke="#111"/><circle cx="21" cy="20" r="2" fill="#fff" stroke="#111"/></svg>
            <svg viewBox="0 0 30 30"><use href="#tile"/><g shape-rendering="crispEdges"><rect x="2" y="2" width="26" height="26" fill="#3c3"/><path d="M2 2h8v6H2zM20 2h8v6h-8z" fill="#bfe6a0"/><path d="M10 2h5v6h-5zM15 8h5v6h-5zM5 8h5v6H5zM20 8h8v6h-8z" fill="#7e3"/><path d="M2 17h5v11H2zM11 14h4v8h-4zM15 20h5v8h-5z" fill="#0a6a0a"/><path d="M24 20h4v8h-4z" fill="#4fc"/></g></svg>
          </div>
        </div>
        <h3>Input</h3>
      </div>
      <div class="group">
        <div class="blocks">
          <div class="block">
            <svg viewBox="0 0 30 30"><path d="M14 6C12 12 9 14 9 19M14 6c6 4 9 9 9 15" fill="none" stroke="#7a2a2a" stroke-width="1.500"/><path d="M15 7C11 9 8 6 7 12c6 0 9-3 10-10-5 0-8 2-10 10" fill="#3a9a1c"/><circle cx="8" cy="21" r="6" fill="url(#gRedBall)"/><circle cx="22" cy="23" r="6" fill="url(#gRedBall)"/></svg>
            <svg viewBox="0 0 30 30"><use href="#tile"/><path d="M15 27V15M15 18L7 10M15 18l8-8M15 14l-3-8M15 14l4-9M9 13l-5-1M21 13l5-1" stroke="#111" stroke-width="2"/><g fill="none" stroke="#111" stroke-width="3" stroke-dasharray="2 1"><path d="M5 12c0-10 20-10 20 0M8 13c0-7 14-7 14 0"/></g><path d="M2 26h26v3H2z" fill="#111"/></svg>
          </div>
          <div class="block">
            <svg viewBox="0 0 30 30"><path d="M2 11h14V5l12 10-12 10v-6H2z" fill="#555" stroke="#222"/></svg>
            <svg viewBox="0 0 30 30"><path d="M2 11h14V5l12 10-12 10v-6H2z" fill="#e8e8e8" stroke="#888" stroke-width="1.500"/></svg>
          </div>
          <div class="block">
            <svg viewBox="0 0 30 30"><ellipse cx="12" cy="12" rx="10" ry="7.500" transform="rotate(-45 12 12)" fill="#ccc" stroke="#777"/><circle cx="13" cy="12" r="3" fill="#888"/><ellipse cx="20" cy="19" rx="10" ry="7" transform="rotate(-45 20 19)" fill="#e0508c" stroke="#8a1048"/><circle cx="20" cy="18" r="3" fill="#a01050"/></svg>
            <svg viewBox="0 0 30 30"><path d="M11 2h8M12 2v9L5 25q0 3 3 3h14q3 0 3-3L18 11V2" fill="#f4e4ee" stroke="#a04878"/><path d="M9 17h12l4 8q0 3-3 3H8q-3 0-3-3z" fill="#d82878"/></svg>
          </div>
        </div>
        <h3>Util</h3>
      </div>
    </div>

    <div class="gh-bar">
      <button aria-label="Open file"><svg viewBox="0 0 28 28"><path d="M5 14V6l5-5h13v13z" fill="#eee" stroke="#666"/><path d="M2 26V10h12l2-3h10v19z" fill="url(#gGreen)" stroke="#2a6a10"/></svg></button>
      <button aria-label="Save file"><svg viewBox="0 0 28 28"><path d="M1 1h26v26H4l-3-3z" fill="#1c62d8" stroke="#0c2f80" stroke-width="1.500"/><path d="M6 1h16v13H6z" fill="#eee"/><path d="M8 5h12M8 9h12" stroke="#aaa"/><path d="M8 18h13v9H8z" fill="#123a90"/><path d="M15 19h4v7h-4z" fill="#fff"/></svg></button>
      <i class="sep"></i>
      <select aria-label="Zoom"><option>125%</option></select>
      <button aria-label="Zoom extents"><svg viewBox="0 0 28 28"><path d="M2 11V2h9M17 2h9v9M26 17v9h-9M11 26H2v-9" fill="none" stroke="#222" stroke-width="4"/><path d="M11 11l6 6M17 11l-6 6" stroke="#222" stroke-width="2"/></svg></button>
      <b class="drop">▾</b>
      <button aria-label="Named views"><svg viewBox="0 0 28 28"><path d="M1 14C7 4 21 4 27 14 21 23 7 23 1 14z" fill="#fff" stroke="#333" stroke-width="1.500"/><circle cx="14" cy="13" r="7" fill="#5ac0f0" stroke="#168"/><circle cx="14" cy="13" r="3" fill="#024"/></svg></button>
      <b class="drop">▾</b>
      <button aria-label="Sketch"><svg viewBox="0 0 28 28"><path d="M13 18L25 2l2 11-11 11-6 3z" fill="#d83020" stroke="#811"/><path d="M13 18l3 6-6 3z" fill="#f4c890" stroke="#811"/><path d="M2 14c6-5 8-1 5 4s-2 8 4 8" fill="none" stroke="#511" stroke-width="2"/></svg></button>
      <div class="bar-right">
        <button aria-label="No preview"><svg viewBox="0 0 28 28"><path d="M4 10l9-8q8 0 11 6l-6 10H4z" fill="#ddd" stroke="#888"/><ellipse cx="18" cy="8" rx="3" ry="5" transform="rotate(-45 18 8)" fill="#bbb" stroke="#888"/><ellipse cx="14" cy="21" rx="11" ry="6" fill="#333"/></svg></button>
        <button aria-label="Wireframe"><svg viewBox="0 0 28 28"><g fill="none" stroke="#444" stroke-width="1.500"><path d="M3 15L14 2q9 0 12 10L14 26Q4 26 3 15z"/><ellipse cx="19" cy="9" rx="4" ry="7" transform="rotate(-45 19 9)"/><ellipse cx="10" cy="19" rx="4" ry="7" transform="rotate(-45 10 19)"/></g></svg></button>
        <button class="picked" aria-label="Shaded"><svg viewBox="0 0 28 28"><path d="M1 16L12 2q12 0 15 10L15 27Q2 26 1 16z" fill="#c01810" stroke="#600"/><ellipse cx="19" cy="9" rx="5" ry="8" transform="rotate(-50 19 9)" fill="#8c0c08" stroke="#e04030"/></svg></button>
        <i class="sep"></i>
        <button aria-label="Selected only"><svg viewBox="0 0 28 28"><path d="M2 17L14 2q9 0 13 10L16 26Q4 26 2 17z" fill="#ddd" stroke="#666"/><path d="M7 9l7-7q9 0 13 10l-7 9z" fill="#4a9a18" stroke="#250"/><ellipse cx="19" cy="8" rx="3" ry="6" transform="rotate(-50 19 8)" fill="#2c6c08"/><path d="M4 5l20 21" stroke="#222" stroke-width="1.500"/></svg></button>
        <button aria-label="Preview settings"><svg viewBox="0 0 28 28"><circle cx="14" cy="14" r="12" fill="#ddd" stroke="#777"/><path d="M14 2a12 12 0 0 0 0 24z" fill="#e07a18" stroke="#841"/></svg></button>
        <i class="sep"></i>
        <button aria-label="Quality"><svg viewBox="0 0 28 28"><path d="M14 2l10 4 2 10-6 9-10 0-7-7 2-11z" fill="url(#gSky)" stroke="#1c3c88" stroke-width="1.500"/></svg></button>
        <b class="drop">▾</b>
      </div>
    </div>

    <div class="canvas">
      <svg class="wires">
        <path class="lines" d="M119.500 0v449M307.500 0v449M494.500 0v449M682.500 0v449M869.500 0v449M0 20.500h982M0 82.500h982M0 145.500h982M0 207.500h982M0 270.500h982M0 332.500h982M0 395.500h982"/>
        <path class="wire" d="M145 102C205 102 207 184 267 184M71 209H267M178 277C222 277 222 234 267 234M178 312C222 312 222 259 267 259M427 221H474M785 263H812"/>
        <g class="double"><path d="M427 188C481 188 481 107 535 107"/><path d="M427 254H474"/><path d="M543 254C674 254 674 238 808 238"/></g>
        <g class="inner"><path d="M427 188C481 188 481 107 535 107"/><path d="M427 254H474"/><path d="M543 254C674 254 674 238 808 238"/></g>
        <g class="ports"><circle cx="79" cy="102" r="4"/><circle cx="142" cy="102" r="4"/><circle cx="68" cy="209" r="4"/><circle cx="174" cy="277" r="4"/><circle cx="174" cy="312" r="4"/><circle cx="271" cy="184" r="4"/><circle cx="271" cy="209" r="4"/><circle cx="271" cy="234" r="4"/><circle cx="271" cy="259" r="4"/><circle cx="423" cy="188" r="4"/><circle cx="423" cy="221" r="4"/><circle cx="423" cy="254" r="4"/><circle cx="474" cy="221" r="4"/><circle cx="537" cy="221" r="4"/><circle cx="476" cy="254" r="4"/><circle cx="539" cy="254" r="4"/><circle cx="540" cy="107" r="4"/><circle cx="980" cy="107" r="4"/><circle cx="701" cy="263" r="4"/><circle cx="781" cy="263" r="4"/><circle cx="812" cy="238" r="4"/><circle cx="812" cy="263" r="4"/><circle cx="894" cy="251" r="4"/></g>
      </svg>
      <div class="node hidden crv">Crv</div>
      <div class="node hidden rev"><ul class="in"><li>P</li><li>A</li><li>D</li></ul><strong>RevSrf</strong><ul><li>S</li></ul></div>
      <div class="node slider count"><label for="s1">count</label><input id="s1" class="diamond" type="range" min="2" max="14" value="5"><output>5</output></div>
      <div class="node slider offset"><label for="s2"></label><input id="s2" aria-label="stackOffset" type="range" min="-10" max="2" step="0.001" value="-4.596"><output>-4.596</output></div>
      <div class="node python"><ul class="in"><li>c</li><li>g</li><li>count</li><li>stackOffset</li></ul><strong>Python</strong><ul><li>out</li><li>b</li><li>a</li></ul></div>
      <div class="node hidden pt">Pt</div>
      <div class="node geo">Geo</div>
      <div class="node hidden unit"><ul class="in"><li>F</li></ul><strong>Z</strong><ul><li>V</li></ul></div>
      <div class="node extr"><ul class="in"><li>B</li><li>D</li></ul><strong>Extr</strong><ul><li>E</li></ul></div>
      <div class="panel">
        <div class="path">{0;0}</div>
        <ol start="0"><li><b>0</b>0.474376103562</li><li><b>1</b>0.605782077671</li><li><b>2</b>0.737188051781</li><li><b>3</b>0.86859402589</li><li><b>4</b>1.0</li></ol>
      </div>
      <div class="recent">
        <button aria-label="Python"><svg viewBox="0 0 24 24"><path d="M9 1h6l2 2v7l-2 2H9l-2 2v3H4l-2-2v-5l2-3h8V6H7V3z" fill="#4a6ed0" stroke="#224"/><path d="M15 23H9l-2-2v-6l2-2h6l2-2V7h3l2 2v6l-2 3h-8v0h5v3z" fill="#f5a010" stroke="#840"/></svg></button>
        <button aria-label="Normal"><svg viewBox="0 0 24 24"><path d="M9 1h6v22H9z" fill="#7dc83a" stroke="#375"/><path d="M10 10h6V7l7 5-7 5v-3h-6z" fill="#c01010"/><path d="M1 15V8l5 7V8" fill="none" stroke="#333"/></svg></button>
        <button aria-label="Slider"><svg viewBox="0 0 30 30"><use href="#tile"/><path d="M13 7h4v5h4l-6 6-6-6h4z" fill="#111"/><path d="M4 21h22M5 21v5M8 21v4M11 21v5M14 21v4M17 21v5M20 21v4M23 21v5" stroke="#111"/></svg></button>
        <button aria-label="Curve"><svg viewBox="0 0 24 24"><path d="M3 20C18 20 6 4 21 4" fill="none" stroke="#7a0c0c" stroke-width="2.500"/><circle cx="3" cy="20" r="2" fill="#fff" stroke="#222"/><circle cx="21" cy="4" r="2" fill="#fff" stroke="#222"/></svg></button>
        <button aria-label="Panel"><svg viewBox="0 0 30 30"><rect x="1" y="1" width="28" height="28" rx="2" fill="#fc3" stroke="#a70"/><path d="M4 18c1 6 3 5 8-5-3 10 0 14 7-5-3 12 1 14 6-5" fill="none" stroke="#a8560a" stroke-width="2.500"/></svg></button>
      </div>
      <svg class="compass" viewBox="0 0 70 60"><path d="M6 22l-3-8 8-2 4 6zM21 10l3-7 7 2-4 6z" fill="#111"/><path d="M17 14q-6 8-5 18M17 46l4 9 5 2" fill="none" stroke="#111" stroke-width="6"/><circle cx="40" cy="31" r="25" fill="#fff" stroke="#333"/><circle cx="40" cy="31" r="22" fill="url(#dial)" stroke="#777"/><defs><radialGradient id="dial"><stop offset="0" stop-color="#f4f4f4"/><stop offset="1" stop-color="#aaa"/></radialGradient></defs><path d="M17 24l9 3-7 5zM46 8l6 2-5 6zM64 37l-8 3 5 5zM33 54l1-8-7 5z" fill="#fff"/></svg>
    </div>

    <footer class="gh-status">
      <svg viewBox="0 0 20 20"><circle cx="10" cy="10" r="9" fill="#1f7fd0" stroke="#113a88" stroke-width="2"/><path d="M8 4h4l-1 8H9z" fill="#d8f4ff"/><circle cx="10" cy="15" r="1.500" fill="#d8f4ff"/></svg>
      <span>Autosave complete (22 seconds ago)</span>
      <span class="version">1.0.0007</span>
      <svg class="grip" viewBox="0 0 12 12"><path d="M10 1v2M10 5v2M10 9v2M6 5v2M6 9v2M2 9v2" stroke="#aaa" stroke-width="2"/></svg>
    </footer>
  </section>

  <script>
    const NS = "http://www.w3.org/2000/svg";

    function addPath(svg, cls, d) {
      const p = document.createElementNS(NS, "path");
      p.setAttribute("class", cls);
      p.setAttribute("d", d);
      svg.insertBefore(p, svg.firstChild);
    }

    // construction plane grid: ten minor lines to one major, through the origin
    function drawGrid(svg) {
      const ox = +svg.dataset.x, oy = +svg.dataset.y, step = +svg.dataset.step / 10;
      const w = svg.clientWidth, h = svg.clientHeight;
      let minor = "", major = "";
      for (let i = Math.ceil(-ox / step); ox + i * step < w; i++) {
        const line = `M${Math.round(ox + i * step) + 0.5} 0V${h}`;
        if (i % 10) minor += line; else major += line;
      }
      for (let i = Math.ceil(-oy / step); oy + i * step < h; i++) {
        const line = `M0 ${Math.round(oy + i * step) + 0.5}H${w}`;
        if (i % 10) minor += line; else major += line;
      }
      addPath(svg, "major", major);
      addPath(svg, "minor", minor);
    }

    document.querySelectorAll(".scene").forEach(drawGrid);
  </script>
</body>
</html>
```
FILE: styles.css
```css
* {
  box-sizing: border-box;
}
body {
  margin: 0;
  height: 100vh;
  overflow: hidden;
  display: flex;
  flex-direction: column;
  background: #e9ebef;
  color: #111;
  font: 14px/20px "Open Sans", "Noto Sans", sans-serif;
}
h1, h2, h3, p, ul, ol {
  margin: 0;
  padding: 0;
  font-size: inherit;
  font-weight: 400;
  list-style: none;
}
a {
  color: inherit;
  text-decoration: none;
}
button {
  border: 0;
  padding: 0;
  background: none;
  color: inherit;
  font: inherit;
}
svg {
  display: block;
}
.defs {
  position: absolute;
  width: 0;
  height: 0;
}

/* title bar */
.titlebar {
  flex: none;
  height: 29px;
  display: flex;
  align-items: center;
  padding: 0 3px 0 2px;
  background: linear-gradient(#222, #222) 868px 0 / 242px 2px no-repeat #e81123;
  color: #fff;
}
.app-icon {
  width: 20px;
  height: 20px;
  margin-right: 5px;
}
.win-buttons {
  margin-left: auto;
  display: flex;
}
.win-buttons button {
  width: 58px;
  height: 28px;
  display: grid;
  place-items: center;
}
.win-buttons svg {
  width: 12px;
  height: 12px;
  fill: none;
  stroke: currentColor;
}

.menu {
  flex: none;
  height: 28px;
  display: flex;
  gap: 14px;
  padding: 3px 8px;
  background: #fff;
  border-bottom: 5px solid #ececef;
}

/* command line */
.command {
  flex: none;
  margin-left: 4px;
  padding-left: 3px;
  border-left: 1px solid #c3c8d6;
  height: 66px;
  border-bottom: 1px solid #ccd2e0;
}
.history {
  display: flex;
  height: 39px;
  background: #fff;
  border-bottom: 1px solid #b4c0d6;
}
.history-text {
  flex: 1;
  padding-left: 2px;
  white-space: pre;
  line-height: 18px;
}
.history-text p {
  height: 20px;
}
.history-scroll {
  width: 21px;
  background: #f0f0f0;
  display: grid;
  place-items: center;
}
.history-scroll svg,
.hscroll svg {
  width: 9px;
  height: 9px;
  fill: none;
  stroke: #555;
  stroke-width: 2;
}
.prompt {
  display: flex;
  height: 23px;
  padding-left: 2px;
  background: #fff;
}
.prompt label {
  font-weight: 700;
  line-height: 22px;
}
.caret {
  width: 1px;
  height: 20px;
  margin-left: 4px;
  background: #000;
}
.prompt input {
  flex: 1;
  border: 0;
  outline: 0;
  font: inherit;
}
.spin {
  width: 20px;
  display: grid;
  gap: 1px;
  padding: 1px;
}
.spin button {
  border: 1px solid #999;
  background: #eee;
  font-size: 7px;
  line-height: 8px;
}

/* toolbar tabs */
.tabs {
  flex: none;
  height: 28px;
  margin: 0 0 0 6px;
  padding: 5px 0 0 2px;
  display: flex;
  border-bottom: 1px solid #bcc6dc;
}
.tabs button {
  position: relative;
  padding: 0 16px 0 15px;
  background: #d6d6d6;
  border-top: 1px solid #b8c3da;
  border-radius: 0 4px 0 0;
  line-height: 22px;
}
.tabs button::before {
  content: "";
  position: absolute;
  left: -5px;
  top: 0;
  width: 12px;
  height: 100%;
  background: inherit;
  border-left: 1px solid #b8c3da;
  transform: skewX(-24deg);
}
.tabs button.active {
  background: #e9ebef;
  border-right: 1px solid #b8c3da;
}
.tabs .active + button::before {
  display: none;
}
.gear {
  width: 15px;
  height: 15px;
  margin: 4px 1px 0 auto;
}

.toolbar {
  flex: none;
  height: 37px;
  margin-left: 6px;
  padding: 2px 0 0 2px;
  border-left: 1px solid #d0d5e0;
  display: flex;
}
.toolbar button,
.palette button {
  position: relative;
  width: 28px;
  height: 26px;
}
.toolbar svg {
  width: 22px;
  height: 22px;
  margin: 0 auto;
}
.fly::after {
  content: "";
  position: absolute;
  right: 0;
  bottom: 0;
  border: 3px solid transparent;
  border-right-color: #666;
  border-bottom-color: #666;
}

/* workspace */
.workspace {
  flex: 1;
  min-height: 0;
  display: grid;
  grid-template-columns: 65px 1fr 265px;
}
.palette {
  align-self: start;
  display: grid;
  grid-template-columns: 28px 28px;
  margin: 6px 4px 0 2px;
  padding: 3px 0 0;
  border-top: 3px double #c3cade;
}
.palette button {
  width: 26px;
  height: 28px;
}
.palette svg {
  width: 22px;
  height: 22px;
  margin: 0 auto;
}
.stage {
  display: flex;
  flex-direction: column;
  min-width: 0;
  padding: 3px 8px 0 0;
}
.viewports {
  flex: 1;
  min-height: 0;
  display: grid;
  grid-template-columns: 824fr 752fr;
  grid-template-rows: 416fr 334fr;
  gap: 5px;
}
.viewport {
  position: relative;
  min-width: 0;
  min-height: 0;
  overflow: hidden;
  border: 1px solid #bfc6d8;
  background: #e6e6e6;
}
.scene {
  width: 100%;
  height: 100%;
}
.scene text {
  font-size: 16px;
  fill: #666;
}
.minor, .major {
  fill: none;
  stroke: #bebebe;
  shape-rendering: crispEdges;
}
.major {
  stroke: #fff;
}
.axis-x, .axis-y {
  fill: none;
  stroke: #c04048;
  stroke-width: 2;
}
.axis-y {
  stroke: #0a820a;
}
.gnomon {
  fill: none;
  stroke: #666;
}
.vp-label {
  position: absolute;
  left: 0;
  top: 0;
  height: 23px;
  display: flex;
  align-items: center;
  padding: 0 0 2px 8px;
  background: #c9cdd4;
  color: #555;
  font-size: 15px;
  font-weight: 700;
}
.vp-label span {
  margin-left: 8px;
  padding: 0 3px 0 2px;
  border-left: 1px solid #444;
  font-size: 8px;
}
.vp-label.current {
  background: #8ca4c0;
  color: #000;
}
.view-tabs {
  flex: none;
  height: 35px;
  padding-top: 2px;
  display: flex;
}
.view-tabs button {
  height: 25px;
  padding: 0 9px 0 12px;
  background: #d6d6d6;
  border-right: 1px solid #c3cade;
  border-bottom: 1px solid #c3cade;
  clip-path: polygon(0 0, 100% 0, 100% 100%, 10px 100%, 0 60%);
}
.view-tabs .active,
.view-tabs .add {
  background: #eef0f4;
}
.view-tabs .active {
  padding-left: 14px;
}
.view-tabs .add {
  padding: 0 10px 0 13px;
  color: #777;
}

/* layer panel */
.layers {
  display: flex;
  flex-direction: column;
  margin: 6px 1px 5px 0;
  border: 1px solid #bfc6d8;
  background: #fff;
  overflow: hidden;
}
.layers-tab {
  flex: none;
  height: 29px;
  display: flex;
  align-items: end;
  justify-content: flex-end;
  background: #e9ebef;
  border-top: 1px solid #c3cade;
}
.layers-tab i {
  width: 60px;
  height: 23px;
  background: #d6d6d6;
  clip-path: polygon(0 0, 35px 0, 100% 100%, 0 100%);
}
.layers-tab svg {
  width: 18px;
  height: 18px;
  margin: 0 0 2px -12px;
}
.layers-tools {
  flex: none;
  height: 31px;
  display: flex;
  align-items: center;
  gap: 8px;
  justify-content: flex-end;
  background: #f6f6fa;
  border-bottom: 1px solid #c3cade;
  margin-right: -14px;
}
.layers-tools button {
  position: relative;
}
.layers-tools svg {
  width: 20px;
  height: 20px;
}
.layers table {
  width: 100%;
  border-collapse: collapse;
  table-layout: fixed;
  border-right: 4px solid #f0f0f0;
}
.layers th {
  height: 26px;
  padding: 0 0 0 222px;
  text-align: left;
  font-weight: 400;
  border-right: 1px solid #ddd;
}
.layers th:last-child,
.layers td:last-child {
  width: 12px;
  padding: 0;
  border-right: 0;
}
.layers td {
  height: 24px;
  border-bottom: 1px dotted #ccc;
}
.layers .bold {
  font-weight: 700;
}
.layers .selected td {
  background: #0078d7;
  color: #fff;
}
.hscroll {
  display: flex;
  height: 20px;
  margin-top: auto;
  background: #f0f0f0;
}
.hscroll button {
  width: 21px;
  display: grid;
  place-items: center;
}
.track {
  flex: 1;
}
.track i {
  display: block;
  width: 60%;
  height: 100%;
  background: #cdcdcd;
}

/* object snaps */
.osnap {
  flex: none;
  height: 26px;
  margin-left: 6px;
  padding-left: 5px;
  border-left: 1px solid #c3cade;
  display: flex;
  align-items: center;
  gap: 8px;
}
.osnap label {
  display: flex;
  align-items: center;
  gap: 4px;
}
.osnap .last {
  margin-left: 12px;
  color: #333;
}
.osnap input {
  appearance: none;
  width: 16px;
  height: 16px;
  margin: 0;
  border: 1px solid #333;
  background: #fff;
}
.osnap input:checked::before {
  content: "";
  display: block;
  width: 10px;
  height: 5px;
  margin: 3px 2px;
  border: 1px solid #111;
  border-width: 0 0 1px 1px;
  transform: rotate(-48deg);
}
.osnap .mixed {
  border-color: #0a5aa8;
  background: #888;
  box-shadow: inset 0 0 0 3px #cfe6f8;
}
.osnap input:disabled {
  border-color: #bbb;
  background: #e0e0e0;
}

/* status bar */
.status {
  flex: none;
  height: 20px;
  display: flex;
  border-top: 1px solid #bfc6dc;
  line-height: 24px;
}
.status > * {
  padding: 0 7px;
  border-right: 1px solid #c3c8dc;
  text-align: center;
  line-height: 24px;
}
.status .w-s {
  width: 60px;
  padding: 0;
}
.status .w-m {
  width: 108px;
  padding: 0;
}
.status .layer {
  width: 208px;
  padding: 0 5px;
  display: flex;
  gap: 4px;
}
.layer i {
  width: 14px;
  height: 14px;
  margin-top: 5px;
  background: #000;
}
.status .on {
  padding: 0 6px;
  background: #e3f1fb;
  font-weight: 700;
}
.status .memory {
  flex: 1;
  padding: 0 2px;
  margin-right: 7px;
  text-align: left;
}

/* Grasshopper window */
.gh {
  position: absolute;
  left: 891px;
  top: 180px;
  width: 987px;
  border: 1px solid #999;
  background: #f0f0f0;
  box-shadow: 0 5px 14px rgba(0, 0, 0, .35);
}
.gh-title {
  height: 37px;
  display: flex;
  align-items: center;
  padding-left: 8px;
  background: #fff;
  color: #999;
}
.gh-menu {
  display: flex;
  gap: 22px;
  height: 34px;
  padding: 8px 11px 0 14px;
  background: linear-gradient(90deg, #f0f0f0, #fcfcfc);
}
.gh-menu span {
  margin-left: auto;
}
.gh-tabs {
  display: flex;
  height: 28px;
  background: #f0f0f0;
  border-bottom: 1px solid #999;
  font: 13px/26px "Liberation Sans", Arial, sans-serif;
  color: #666;
}
.gh-tabs button {
  padding: 3px 10px 0 11px;
}
.gh-tabs .active {
  height: 28px;
  padding: 0 9px 0 8px;
  border: 1px solid #999;
  border-bottom: 0;
  border-radius: 8px 8px 0 0;
  background: linear-gradient(#fff, #e4e4e4);
  color: #000;
}
.ribbon {
  display: flex;
  gap: 4px;
  height: 108px;
  padding: 3px;
  border-bottom: 1px solid #888;
  border-radius: 0 10px 0 0;
  background: linear-gradient(#dadada, #f0f0f0);
}
.group {
  align-self: start;
  border: 1px solid #777;
  border-radius: 6px;
  overflow: hidden;
  background: linear-gradient(#fafafa, #d4d4d4 10px, #eaeaea);
}
.blocks {
  display: flex;
  gap: 17px;
  height: 71px;
  padding: 3px 4px;
}
.block {
  position: relative;
  display: grid;
  grid-template-rows: 30px 30px;
  grid-auto-flow: column;
  gap: 5px;
}
.block svg {
  width: 30px;
  height: 30px;
}
.block + .block::before {
  content: "";
  position: absolute;
  left: -9px;
  top: 0;
  width: 1px;
  height: 65px;
  background: linear-gradient(#ccc, #888, #ccc);
}
.group h3 {
  position: relative;
  height: 18px;
  padding-right: 14px;
  background: #222;
  color: #fff;
  text-align: center;
  font: 13px/16px "Liberation Sans", Arial, sans-serif;
}
.group h3::after {
  content: "+";
  position: absolute;
  right: 3px;
  color: #999;
  font-weight: 700;
}
.glyph {
  font: 700 20px "Liberation Serif", serif;
  fill: #fff;
  text-anchor: middle;
}
.glyph.small {
  font-size: 16px;
}
.glyph.sans {
  font-family: "Liberation Sans", sans-serif;
}
.gh-bar {
  display: flex;
  align-items: center;
  height: 38px;
  padding: 0 5px 0 3px;
  gap: 8px;
  background: linear-gradient(#fff, #f0f0f0);
}
.gh-bar svg {
  width: 28px;
  height: 28px;
}
.sep {
  width: 1px;
  height: 26px;
  margin: 0 -2px;
  background: #bbb;
}
.drop {
  font-size: 10px;
}
.gh-bar select {
  appearance: none;
  width: 180px;
  height: 28px;
  padding: 0 4px;
  border: 1px solid #777;
  font: inherit;
  background: linear-gradient(45deg, transparent 44%, #444 44% 56%, transparent 56%) 160px 11px / 6px 6px no-repeat, linear-gradient(-45deg, transparent 44%, #444 44% 56%, transparent 56%) 165px 11px / 6px 6px no-repeat, #fff;
}
.bar-right {
  margin-left: auto;
  display: flex;
  align-items: center;
  gap: 5px;
}
.bar-right .sep {
  margin: 0 3px;
}
.bar-right .picked {
  padding: 2px;
  border: 1px solid #0078d7;
}

/* definition canvas */
.canvas {
  position: relative;
  height: 449px;
  margin: 0 1px;
  overflow: hidden;
  background: #d4cfc8;
  font-size: 13px;
}
.wires {
  width: 100%;
  height: 100%;
  fill: none;
}
.lines {
  stroke: #bcb8b0;
}
.wire, .double {
  stroke: #5a5852;
  stroke-width: 4;
}
.double {
  stroke-width: 6;
}
.inner {
  stroke: #d4cfc8;
  stroke-width: 1;
}
.ports {
  fill: #fff;
  stroke: #000;
  stroke-width: 2;
}
.node {
  position: absolute;
  display: flex;
  align-items: stretch;
  justify-content: center;
  height: 26px;
  border: 1px solid #333;
  border-radius: 4px;
  background: linear-gradient(#fafafa, #e0e0e0 30%, #c8c8c8);
  line-height: 22px;
}
.node.hidden {
  background: linear-gradient(#e6e6ea, #c4c4cc 38%, #a2a1b0 40%, #918f9e);
}
.node ul {
  flex: 1;
  display: flex;
  flex-direction: column;
  justify-content: space-around;
  padding: 5px 6px 7px;
  line-height: 20px;
}
.node .in {
  text-align: right;
}
.node strong {
  width: 31px;
  margin: 1px 0;
  border: 1px solid #000;
  border-radius: 4px;
  background: linear-gradient(#333, #4a4a4a 88%, #999);
  color: #fff;
  font-size: 16px;
  line-height: 29px;
  text-align: center;
  writing-mode: vertical-rl;
  transform: rotate(180deg);
}
.crv {
  left: 79px;
  top: 89px;
  width: 63px;
}
.rev {
  left: -30px;
  top: 169px;
  width: 98px;
  height: 80px;
}
.rev ul {
  flex: none;
  width: 25px;
}
.rev .in {
  width: 40px;
  padding-right: 5px;
}
.python {
  left: 271px;
  top: 169px;
  width: 152px;
  height: 105px;
}
.python ul {
  padding: 1px 5px 4px;
}
.python .in {
  flex: none;
  width: 81px;
}
.pt {
  left: 474px;
  top: 208px;
  width: 63px;
}
.geo {
  left: 476px;
  top: 241px;
  width: 63px;
}
.unit {
  left: 701px;
  top: 245px;
  width: 80px;
  height: 36px;
}
.extr {
  left: 812px;
  top: 223px;
  width: 82px;
  height: 56px;
}
.extr ul,
.unit ul {
  padding: 1px 6px 3px;
}
.unit .in {
  flex: none;
  width: 20px;
}
.extr .in {
  flex: none;
  width: 24px;
}
.slider {
  left: -60px;
  width: 234px;
  justify-content: flex-start;
}
.slider label {
  flex: none;
  width: 83px;
  padding-right: 8px;
  border-right: 1px solid #333;
  background: linear-gradient(#c4c4cc, #918f9e);
  text-align: right;
}
.slider input {
  appearance: none;
  width: 134px;
  height: 8px;
  margin: 6px 7px;
  background: repeating-linear-gradient(90deg, #aaa 0 1px, transparent 1px 13px) 5px 0 / 126px 5px no-repeat, linear-gradient(#aaa, #aaa) 5px 5px / 126px 1px no-repeat;
}
.slider input::-webkit-slider-thumb {
  appearance: none;
  width: 10px;
  height: 10px;
  margin-top: 2px;
  border: 2px solid #000;
  border-radius: 5px;
  background: #fff;
}
.slider .diamond::-webkit-slider-thumb {
  width: 8px;
  height: 8px;
  border-radius: 0;
  transform: rotate(45deg);
}
.slider output {
  position: absolute;
  left: 135px;
  padding: 0 2px;
}
.count {
  top: 264px;
}
.offset {
  top: 299px;
}
.offset label {
  width: 65px;
}
.offset input {
  width: 152px;
  margin: 6px 7px;
  background: repeating-linear-gradient(90deg, #aaa 0 1px, transparent 1px 15px) 5px 0 / 144px 5px no-repeat, linear-gradient(#aaa, #aaa) 5px 5px / 144px 1px no-repeat;
}
.offset output {
  left: 150px;
}
.panel {
  position: absolute;
  left: 540px;
  top: 48px;
  width: 441px;
  height: 121px;
  border: 2px solid #77744a;
  border-radius: 4px;
  background: #fff85a;
  font: 14px/20px "Liberation Mono", monospace;
}
.panel::after {
  content: "";
  position: absolute;
  right: 0;
  top: 4px;
  bottom: 1px;
  width: 9px;
  border-radius: 4px;
  background: #97933b;
}
.panel .path {
  height: 18px;
  padding-right: 15px;
  background: #d8d24c;
  text-align: right;
  line-height: 13px;
}
.panel li:nth-child(even) {
  background: #f5ef56;
}
.panel li {
  height: 20px;
  line-height: 18px;
}
.panel b {
  display: inline-block;
  width: 16px;
  height: 20px;
  margin-right: 3px;
  padding-left: 4px;
  border-right: 1px solid #ccc64c;
  font-weight: 400;
}
.recent {
  position: absolute;
  left: 0;
  bottom: 0;
  display: flex;
  gap: 11px;
  width: 184px;
  padding: 5px;
  border: 1px solid #111;
  background: linear-gradient(90deg, transparent 175px, #666 175px), linear-gradient(#f0f0f0, #999);
}
.recent svg {
  width: 24px;
  height: 24px;
}
.compass {
  position: absolute;
  right: 8px;
  bottom: 6px;
  width: 70px;
  height: 60px;
}
.gh-status {
  display: flex;
  align-items: center;
  height: 28px;
  padding: 0 2px 0 4px;
  border-top: 2px solid #fff;
}
.gh-status svg {
  width: 20px;
  height: 20px;
  margin-right: 4px;
}
.gh-status .version {
  margin: 0 26px 0 auto;
  color: #888;
}
.gh-status .grip {
  width: 12px;
  height: 12px;
  align-self: end;
  margin: 0;
}
```
